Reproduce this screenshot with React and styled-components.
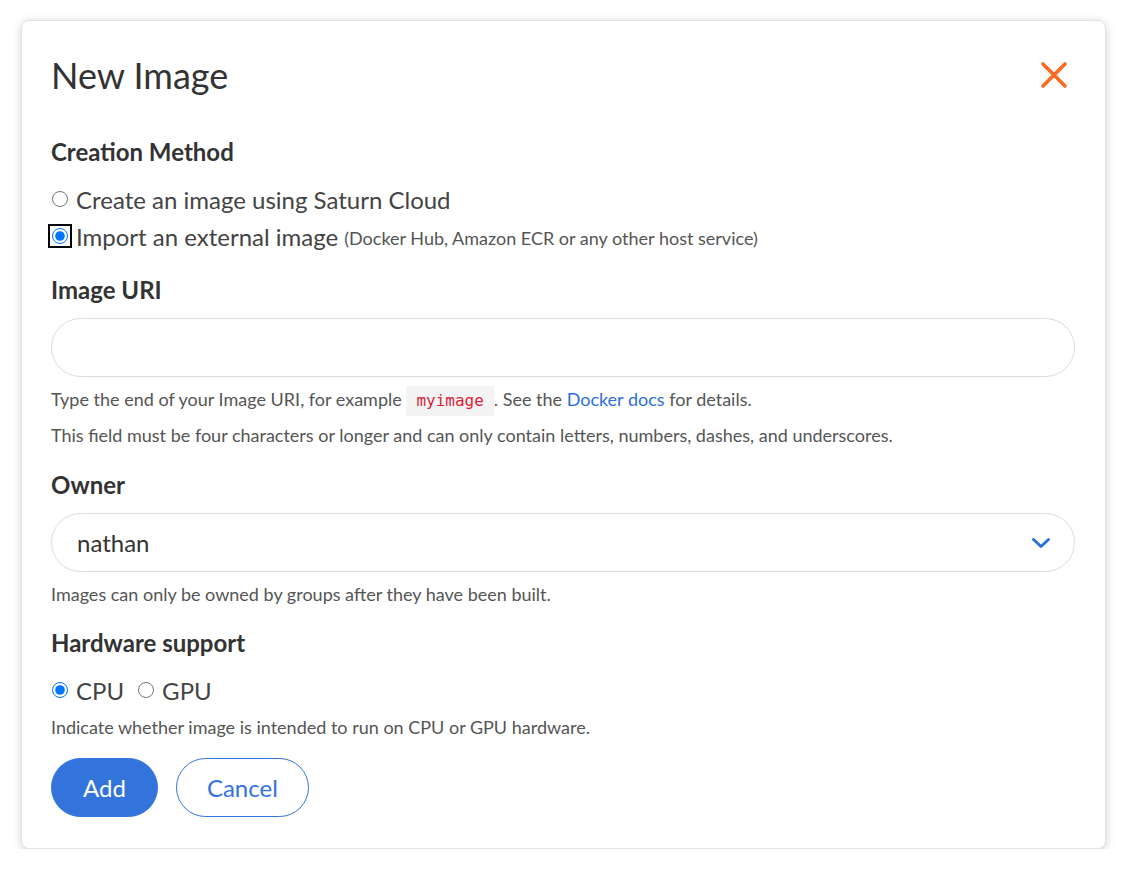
import React from "react";
import styled, { createGlobalStyle } from "styled-components";

const Global = createGlobalStyle`
  body {
    margin: 0;
    background: #fff;
    font-family: Lato, "Open Sans", sans-serif;
    color: #333;
  }
`;

const Page = styled.div`
  padding: 20px 0 0 21px;
`;

const Card = styled.div`
  width: 1085px;
  box-sizing: border-box;
  padding: 30px 30px 31px 29px;
  background: #fff;
  border: 1px solid #e2e2e2;
  border-radius: 8px;
  box-shadow: 0 2px 10px rgba(0, 0, 0, 0.18);
`;

const Header = styled.div`
  display: flex;
  align-items: center;
  justify-content: space-between;
  height: 48px;
`;

const Title = styled.h2`
  margin: 0;
  font-size: 36px;
  font-weight: 400;
  line-height: 48px;
  color: #333;
`;

const CloseButton = styled.button`
  border: none;
  background: none;
  padding: 0;
  margin-right: 6px;
  width: 30px;
  height: 30px;
  display: flex;
  align-items: center;
  justify-content: center;
  cursor: pointer;
`;

const Heading = styled.h3`
  margin: ${(p) => p.$top}px 0 ${(p) => p.$bottom}px;
  font-size: 24px;
  font-weight: 700;
  line-height: 29px;
  color: #333;
`;

const RadioGroup = styled.div`
  display: flex;
  flex-direction: ${(p) => (p.$row ? "row" : "column")};
  gap: ${(p) => (p.$row ? "13px" : "7px")};
`;

const RadioLabel = styled.label`
  display: flex;
  align-items: center;
  height: 30px;
  font-size: 24px;
  color: #444;
  gap: 8px;
  white-space: nowrap;
`;

const Radio = styled.input`
  width: 16px;
  height: 16px;
  margin: 0 0 0 1px;
  ${(p) =>
    p.$focused &&
    `outline: 2px solid #000; outline-offset: 2px; border-radius: 50%;`}
`;

const Aside = styled.span`
  font-size: 18px;
  color: #555;
  margin-left: -2px;
  margin-top: 4px;
`;

const FieldShell = styled.div`
  height: 59px;
  box-sizing: border-box;
  border: 1px solid #dcdcdc;
  border-radius: 30px;
  display: flex;
  align-items: center;
  justify-content: space-between;
  padding: 0 23px 0 25px;
  font-size: 24px;
  color: #333;
`;

const TextInput = styled.input`
  display: block;
  width: 100%;
  height: 59px;
  box-sizing: border-box;
  border: 1px solid #dcdcdc;
  border-radius: 30px;
  padding: 0 25px;
  font: inherit;
  font-size: 24px;
  outline: none;
`;

const Help = styled.p`
  margin: 10px 0 0;
  font-size: 18px;
  line-height: 24px;
  color: #555;
`;

const Code = styled.code`
  font-family: "DejaVu Sans Mono", monospace;
  font-size: 16px;
  color: #dc1e3c;
  background: #f4f4f4;
  padding: 5px 10px 6px;
`;

const Link = styled.a`
  color: #2f6fdc;
  text-decoration: none;
`;

const Actions = styled.div`
  display: flex;
  gap: 18px;
  margin-top: 19px;
`;

const Button = styled.button`
  height: 59px;
  padding: 0 ${(p) => (p.$primary ? 31 : 30)}px;
  border-radius: 30px;
  font-family: Lato, sans-serif;
  font-size: 24px;
  cursor: pointer;
  border: 1px solid #3273dc;
  background: ${(p) => (p.$primary ? "#3273dc" : "#fff")};
  color: ${(p) => (p.$primary ? "#fff" : "#3273dc")};
`;

export default function App() {
  return (
    <Page>
      <Global />
      <Card>
        <Header>
          <Title>New Image</Title>
          <CloseButton aria-label="Close">
            <svg width="28" height="28" viewBox="0 0 28 28">
              <path
                d="M3 3 L25 25 M25 3 L3 25"
                stroke="#ff6a22"
                strokeWidth="3.6"
                strokeLinecap="round"
              />
            </svg>
          </CloseButton>
        </Header>

        <Heading $top={38} $bottom={18}>Creation Method</Heading>
        <RadioGroup>
          <RadioLabel>
            <Radio type="radio" name="method" />
            Create an image using Saturn Cloud
          </RadioLabel>
          <RadioLabel>
            <Radio type="radio" name="method" defaultChecked $focused />
            Import an external image
            <Aside>(Docker Hub, Amazon ECR or any other host service)</Aside>
          </RadioLabel>
        </RadioGroup>

        <Heading $top={24} $bottom={14}>Image URI</Heading>
        <TextInput type="text" />
        <Help>
          Type the end of your Image URI, for example <Code>myimage</Code>. See
          the <Link href="#">Docker docs</Link> for details.
        </Help>
        <Help>
          This field must be four characters or longer and can only contain
          letters, numbers, dashes, and underscores.
        </Help>

        <Heading $top={23} $bottom={14}>Owner</Heading>
        <FieldShell>
          nathan
          <svg width="20" height="12" viewBox="0 0 20 12">
            <path
              d="M2.5 2.5 L10 9.5 L17.5 2.5"
              fill="none"
              stroke="#2f6fdc"
              strokeWidth="3"
              strokeLinecap="round"
              strokeLinejoin="round"
            />
          </svg>
        </FieldShell>
        <Help>Images can only be owned by groups after they have been built.</Help>

        <Heading $top={22} $bottom={18}>Hardware support</Heading>
        <RadioGroup $row>
          <RadioLabel>
            <Radio type="radio" name="hw" defaultChecked />
            CPU
          </RadioLabel>
          <RadioLabel>
            <Radio type="radio" name="hw" />
            GPU
          </RadioLabel>
        </RadioGroup>
        <Help>Indicate whether image is intended to run on CPU or GPU hardware.</Help>

        <Actions>
          <Button $primary>Add</Button>
          <Button>Cancel</Button>
        </Actions>
      </Card>
    </Page>
  );
}
